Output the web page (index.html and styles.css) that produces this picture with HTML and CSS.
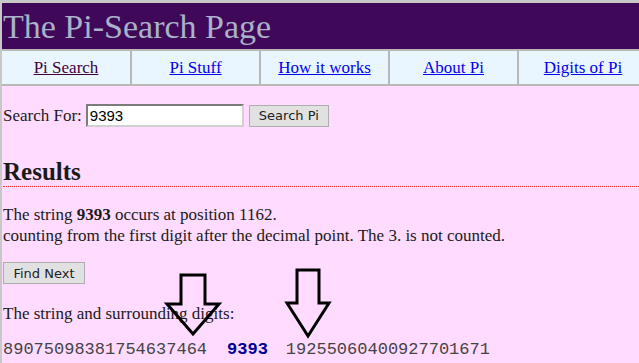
FILE: index.html
```html
<!DOCTYPE html>
<html lang="en">
<head>
    <meta charset="UTF-8">
    <title>The Pi-Search Page</title>
    <link rel="stylesheet" href="styles.css">
</head>
<body>
    <div class="page">
        <div class="header">The Pi-Search Page</div>

        <table class="nav">
            <tr>
                <td><a href="#" class="visited">Pi Search</a></td>
                <td><a href="#">Pi Stuff</a></td>
                <td><a href="#">How it works</a></td>
                <td><a href="#">About Pi</a></td>
                <td><a href="#">Digits of Pi</a></td>
            </tr>
        </table>

        <div class="content">
            <form class="search-form">
                <label for="q">Search For:</label>
                <input type="text" id="q" value="9393">
                <button type="button">Search Pi</button>
            </form>

            <h2>Results</h2>

            <p class="result">
                The string <b>9393</b> occurs at position 1162.<br>
                counting from the first digit after the decimal point. The 3. is not counted.
            </p>

            <button type="button" class="find-next">Find Next</button>

            <p class="surround">The string and surrounding digits:</p>
            <div class="digits">
                <span>89075098381754637464</span><span class="hit">9393</span><span>19255060400927701671</span>
            </div>
        </div>

        <!-- the two arrows pointing at the match -->
        <svg class="arrows" width="180" height="80" viewBox="0 0 180 80">
            <polygon points="21,10 45,10 45,39 59,39 33,69 7,39 21,39" />
            <polygon points="137,5 159,5 159,38 169,38 148,71 127,38 137,38" />
        </svg>
    </div>
</body>
</html>
```

FILE: styles.css
```css
/* general */
html, body {
    overflow: hidden;
}

body {
    margin: 0;
    background-color: #ffdcff;
    color: #1a1a1a;
    font-family: "Liberation Serif", "Times New Roman", serif;
    font-size: 17px;
}

.page {
    position: relative;
    min-height: 360px;
    border-top: 3px solid #c8c8c8;
    border-left: 2px solid #c8c8c8;
}

/* title bar */
.header {
    background-color: #400858;
    color: #a8b2c8;
    font-size: 34px;
    height: 46px;
    line-height: 48px;
    padding-left: 1px;
    white-space: nowrap;
}

/* menu, a bit wider than the window like the original */
.nav {
    width: 645px;
    border-collapse: collapse;
    background-color: #eaf6ff;
    table-layout: fixed;
}

.nav td {
    border: 2px solid #b8b8b8;
    border-right: none;
    text-align: center;
    height: 33px;
    padding: 0;
    font-size: 17px;
}

.nav td:first-child {
    border-left: none;
}

.nav a {
    color: #0000ee;
}

.nav a.visited {
    color: #400040;
}

.content {
    padding-left: 1px;
}

.search-form {
    display: flex;
    align-items: center;
    height: 23px;
    margin: 18px 0 0;
}

.search-form input {
    width: 150px;
    height: 17px;
    margin-left: 4px;
    padding: 1px 2px;
    border: 2px inset #d0d0d0;
    font-family: "Liberation Sans", Arial, sans-serif;
    font-size: 15px;
}

.search-form button,
.find-next {
    font-family: "DejaVu Sans", "Liberation Sans", sans-serif;
    font-size: 13px;
    background-color: #e1e1e1;
    border: 1px solid #adadad;
    color: #222;
    padding: 2px 9px;
    height: 22px;
}

.search-form button {
    margin-left: 5px;
    width: 80px;
}

h2 {
    font-size: 25px;
    margin: 29px 0 0;
    height: 30px;
    line-height: 32px;
    border-bottom: 1px dotted #ff3030;
}

.result {
    margin: 17px 0 0;
    line-height: 21px;
}

.find-next {
    margin-top: 16px;
    width: 82px;
}

.surround {
    margin: 20px 0 0;
    line-height: 20px;
}

.digits {
    margin-top: 16px;
    font-family: "Liberation Mono", "Courier New", monospace;
    font-size: 17px;
    color: #444;
}

.digits .hit {
    color: #000099;
    font-weight: bold;
    margin: 0 18px 0 20px;
}

.arrows {
    position: absolute;
    left: 158px;
    top: 262px;
}

.arrows polygon {
    fill: none;
    stroke: #000;
    stroke-width: 3;
    stroke-linejoin: miter;
}
```
